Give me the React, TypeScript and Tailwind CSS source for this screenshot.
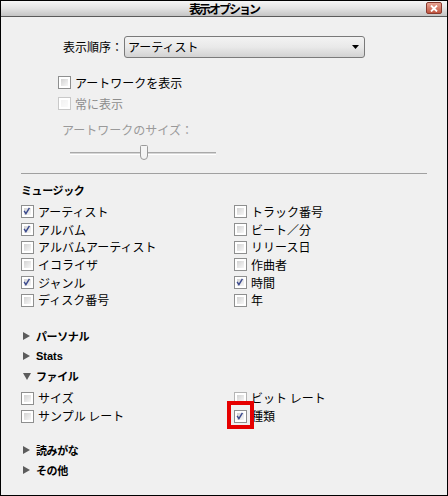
import React from "react";

type Item = { label: string; checked?: boolean; faint?: boolean };

const musicLeft: Item[] = [
  { label: "アーティスト", checked: true },
  { label: "アルバム", checked: true },
  { label: "アルバムアーティスト" },
  { label: "イコライザ" },
  { label: "ジャンル", checked: true },
  { label: "ディスク番号" },
];

const musicRight: Item[] = [
  { label: "トラック番号" },
  { label: "ビート／分" },
  { label: "リリース日" },
  { label: "作曲者" },
  { label: "時間", checked: true },
  { label: "年" },
];

function CheckBox({ checked, disabled, faint }: { checked?: boolean; disabled?: boolean; faint?: boolean }) {
  return (
    <span
      className={
        "relative flex h-[13px] w-[13px] shrink-0 border bg-white p-[2px] " +
        (disabled ? "border-[#c9c9c9]" : faint ? "border-[#b4b4b4]" : "border-[#8e8f8f]")
      }
    >
      <span
        className={
          "block h-full w-full bg-gradient-to-br " +
          (disabled ? "from-[#f2f2f2] to-[#fbfbfb]" : "from-[#d3d3d3] to-[#f7f7f7]")
        }
      />
      {checked && (
        <svg viewBox="0 0 13 13" className="absolute left-0 top-0 h-[11px] w-[11px]">
          <path d="M2.5 5.8 L4.6 9 L8.8 2.2" fill="none" stroke="#3b4a8e" strokeWidth="1.7" />
        </svg>
      )}
    </span>
  );
}

function Check({ item, rowH }: { item: Item; rowH: string }) {
  return (
    <div className={"flex items-center gap-[4px] " + rowH}>
      <CheckBox checked={item.checked} faint={item.faint} />
      <span className="text-[12px] leading-none text-black">{item.label}</span>
    </div>
  );
}

function Section({ label, open }: { label: string; open?: boolean }) {
  return (
    <div className="flex h-[20px] items-center pl-[2px]">
      <span className="flex w-[13px] items-center">
        {open ? (
          <svg viewBox="0 0 8 7" className="h-[7px] w-[8px]">
            <path d="M0 0 H8 L4 7 Z" fill="#5c5c5c" />
          </svg>
        ) : (
          <svg viewBox="0 0 7 8" className="h-[8px] w-[7px]">
            <path d="M0 0 L7 4 L0 8 Z" fill="#5c5c5c" />
          </svg>
        )}
      </span>
      <span className="text-[11px] font-bold leading-none tracking-[-0.4px] text-black">{label}</span>
    </div>
  );
}

export default function App() {
  return (
    <div className="flex h-[496px] w-[448px] flex-col border border-black bg-[#f0f0f0] font-['Noto_Sans_CJK_JP','Liberation_Sans',sans-serif] text-black">
      {/* title bar */}
      <div className="relative flex h-[16px] items-center justify-center border-b border-[#5a5a5a] bg-gradient-to-b from-[#f6f6f6] via-[#e2e2e2] to-[#c4c4c4]">
        <span className="text-[12px] font-bold leading-none tracking-[-2px]">表示オプション</span>
        <span className="absolute right-[5px] top-[1px] flex h-[12px] w-[16px] items-center justify-center rounded-[2px] border border-[#8a3a2e] bg-gradient-to-b from-[#e8a493] to-[#c0533e]">
          <svg viewBox="0 0 8 7" className="h-[7px] w-[8px]">
            <path d="M1 0.5 L7 6.5 M7 0.5 L1 6.5" stroke="#fff" strokeWidth="1.8" />
          </svg>
        </span>
      </div>

      <div className="flex flex-col pl-[20px] pr-[20px]">
        {/* sort order */}
        <div className="mt-[19px] flex h-[22px] items-center">
          <span className="ml-[42px] w-[61px] text-[12px] leading-none">表示順序：</span>
          <div className="flex h-[22px] w-[241px] items-center justify-between rounded-[3px] border border-[#7a7a7a] bg-gradient-to-b from-[#f3f3f3] via-[#e9e9e9] to-[#d2d2d2] pl-[3px] pr-[5px]">
            <span className="text-[12px] leading-none">アーティスト</span>
            <svg viewBox="0 0 7 4" className="h-[4px] w-[7px]">
              <path d="M0 0 H7 L3.5 4 Z" fill="#000" />
            </svg>
          </div>
        </div>

        {/* artwork */}
        <div className="ml-[37px] mt-[14px] flex flex-col">
          <div className="flex h-[21px] items-center gap-[4px]">
            <CheckBox />
            <span className="text-[12px] leading-none">アートワークを表示</span>
          </div>
          <div className="flex h-[21px] items-center gap-[4px]">
            <CheckBox disabled />
            <span className="text-[12px] leading-none text-[#8d8d8d]">常に表示</span>
          </div>
        </div>
        <div className="ml-[41px] mt-[7px] flex h-[18px] items-center text-[12px] leading-none text-[#9a9a9a]">
          アートワークのサイズ：
        </div>
        <div className="relative ml-[49px] mt-[6px] flex h-[16px] w-[146px] items-center">
          <div className="h-[3px] w-full border-t border-b border-t-[#a9a9a9] border-b-white bg-[#d6d6d6]" />
          <svg viewBox="0 0 8 15" className="absolute left-[70px] top-0 h-[15px] w-[8px]">
            <path d="M0.5 1.5 Q0.5 0.5 1.5 0.5 H6.5 Q7.5 0.5 7.5 1.5 V11 Q7.5 14.5 4 14.5 Q0.5 14.5 0.5 11 Z" fill="#f4f4f4" stroke="#9a9a9a" />
          </svg>
        </div>

        <div className="mt-[12px] h-[1px] bg-[#a0a0a0]" />

        {/* music */}
        <div className="mt-[7px] flex h-[18px] items-center text-[11px] font-bold leading-none tracking-[-0.4px]">ミュージック</div>
        <div className="mt-[4px] grid grid-cols-[213px_1fr]">
          <div className="flex flex-col">
            {musicLeft.map((it) => (
              <Check key={it.label} item={it} rowH="h-[17.7px]" />
            ))}
          </div>
          <div className="flex flex-col">
            {musicRight.map((it) => (
              <Check key={it.label} item={it} rowH="h-[17.7px]" />
            ))}
          </div>
        </div>

        {/* sections */}
        <div className="mt-[17px] flex flex-col">
          <Section label="パーソナル" />
          <div className="flex h-[20px] items-center pl-[2px]">
            <span className="flex w-[13px] items-center">
              <svg viewBox="0 0 7 8" className="h-[8px] w-[7px]">
                <path d="M0 0 L7 4 L0 8 Z" fill="#5c5c5c" />
              </svg>
            </span>
            <span className="font-['Liberation_Sans',sans-serif] text-[11px] font-bold leading-none">Stats</span>
          </div>
          <Section label="ファイル" open />
        </div>

        <div className="mt-[3px] grid grid-cols-[213px_1fr]">
          <div className="flex flex-col">
            <Check item={{ label: "サイズ" }} rowH="h-[18px]" />
            <Check item={{ label: "サンプル レート" }} rowH="h-[18px]" />
          </div>
          <div className="flex flex-col">
            <Check item={{ label: "ビット レート", faint: true }} rowH="h-[18px]" />
            <div className="relative flex h-[18px] items-center gap-[4px]">
              <CheckBox checked />
              <span className="text-[12px] leading-none">種類</span>
              <span className="absolute left-[-7px] top-[-6px] h-[28px] w-[27px] border-[4px] border-[#e60000]" />
            </div>
          </div>
        </div>

        <div className="mt-[15px] flex flex-col">
          <Section label="読みがな" />
          <Section label="その他" />
        </div>
      </div>
    </div>
  );
}
